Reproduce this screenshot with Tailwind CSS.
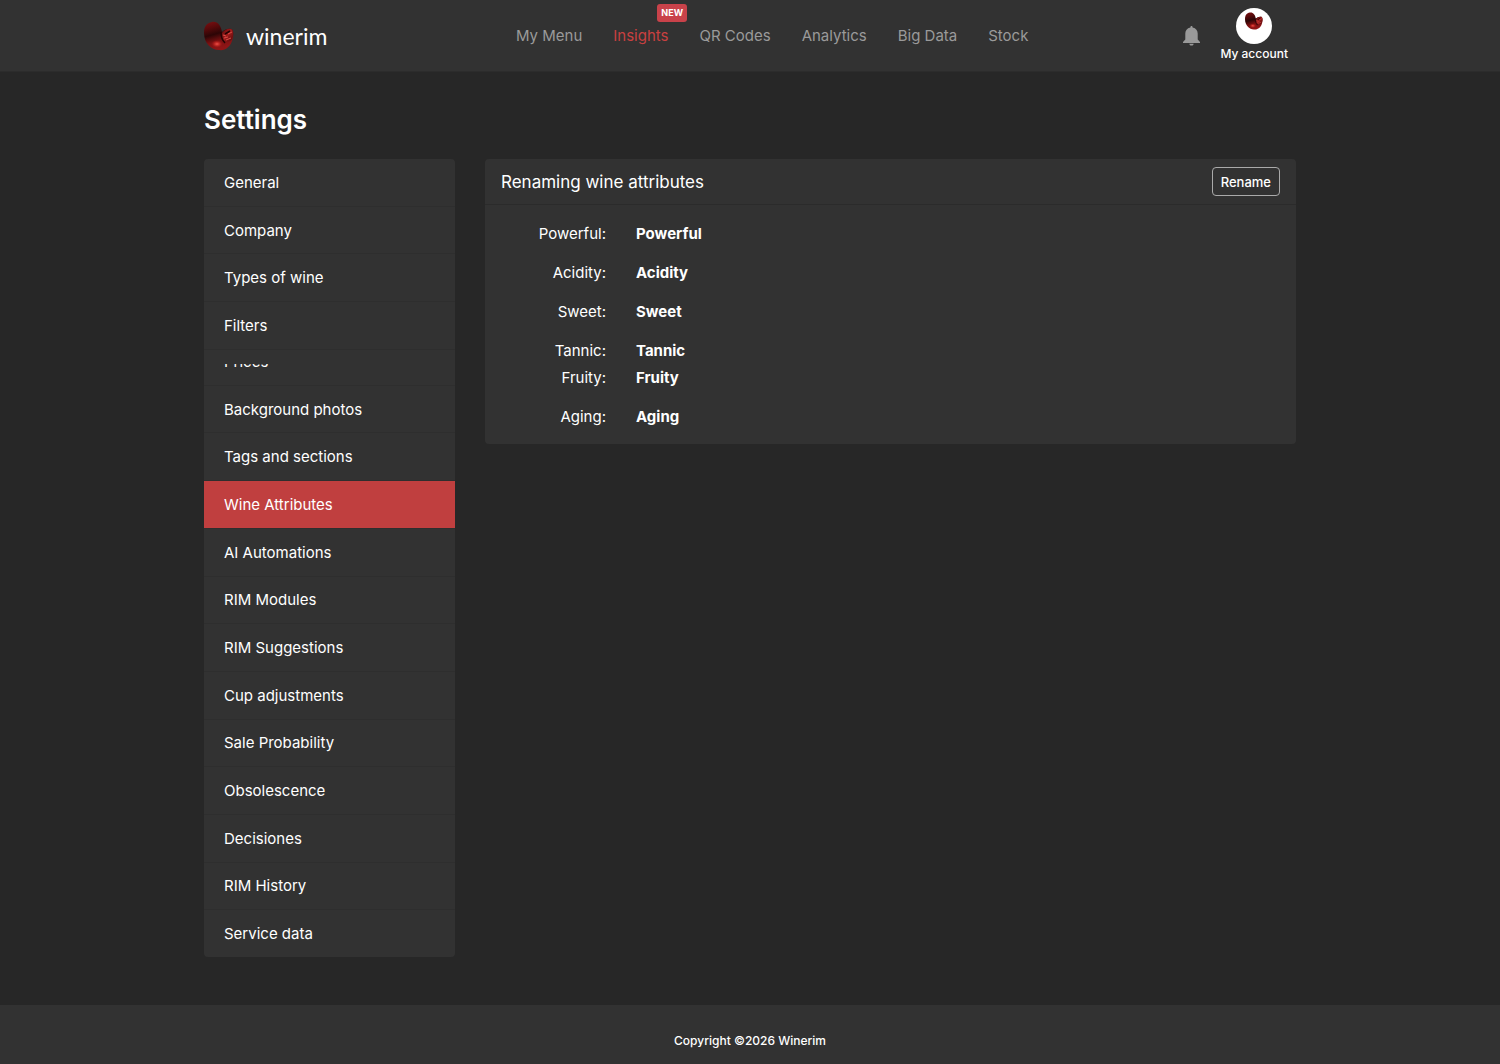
<!DOCTYPE html>
<html lang="en">
<head>
    <meta charset="UTF-8">
    <meta name="viewport" content="width=device-width, initial-scale=1.0">
    <title>Winerim - Settings</title>
    <script src="https://cdn.jsdelivr.net/npm/@tailwindcss/browser@4"></script>
</head>
<body class="bg-[#272727] text-white font-[Inter,sans-serif] text-[15px] leading-6 min-h-screen flex flex-col">
    <header class="bg-[#323232] border-b border-[#2c2c2c]">
        <div class="max-w-[1092px] mx-auto h-[71px] pt-px flex items-center">
            <a href="#" class="flex items-center gap-3 w-[312px]">
                <svg class="size-[30px]" viewBox="0 0 30 30" aria-hidden="true">
                    <defs>
                        <linearGradient id="bean" x1="0" y1="0" x2="0.3" y2="1">
                            <stop offset="0" stop-color="#7d1012"/>
                            <stop offset="0.25" stop-color="#5a0a0b"/>
                            <stop offset="0.5" stop-color="#2c0506"/>
                            <stop offset="0.75" stop-color="#7a1011"/>
                            <stop offset="1" stop-color="#8f1516"/>
                        </linearGradient>
                        <radialGradient id="glow">
                            <stop offset="0" stop-color="#f0524a"/>
                            <stop offset="0.5" stop-color="#c02420" stop-opacity="0.8"/>
                            <stop offset="1" stop-color="#8f1516" stop-opacity="0"/>
                        </radialGradient>
                        <linearGradient id="lobe" x1="0" y1="0" x2="1" y2="1">
                            <stop offset="0" stop-color="#5a0c0c"/>
                            <stop offset="0.5" stop-color="#a01c1c"/>
                            <stop offset="1" stop-color="#4a0808"/>
                        </linearGradient>
                        <symbol id="mark" viewBox="0 0 30 30">
                            <path fill="url(#bean)" d="M8 1C13 0 17 4 18 11C20 9 24 7 27 8C30 9 30 15 28 20C26 26 21 30 15 29C7 29 0 22 0 12C0 5 3 2 8 1Z"/>
                            <ellipse cx="13" cy="23" rx="6" ry="4" fill="url(#glow)"/>
                            <path fill="url(#lobe)" d="M18 12C20 9 24 7 27 8C30 9 29 15 28 18C25 22 20 21 18 18Z"/>
                            <path fill="none" stroke="#240404" stroke-width="1.500" d="M17 11C17 15 18 19 21 22M21 13L26 10"/>
                            <path fill="none" stroke="#d94a44" stroke-width="1" d="M19 14L22 15M20 17L24 16M22 19L27 17M24 13L28 11"/>
                        </symbol>
                    </defs>
                    <use href="#mark"/>
                </svg>
                <span class="font-[Lato,sans-serif] text-[23px]">winerim</span>
            </a>
            <nav class="flex gap-[31px] text-[#9a9a9a]">
                <a href="#">My Menu</a>
                <a href="#" class="relative text-[#c94040]">Insights
                    <span class="absolute left-11 -top-5 bg-[#c9424a] text-white text-[9px] leading-[18px] font-bold px-1 rounded-[3px]">NEW</span>
                </a>
                <a href="#">QR Codes</a>
                <a href="#">Analytics</a>
                <a href="#">Big Data</a>
                <a href="#">Stock</a>
            </nav>
            <div class="ml-auto flex items-center gap-5 pr-2">
                <button aria-label="Notifications">
                    <svg class="w-[17px] h-5 fill-[#999999]" viewBox="0 0 17 20" aria-hidden="true"><path d="M8.500 0C7.700 0 7.400 .6 7.400 1.400C4 2 2.300 4.500 2.300 7.500V13.500L0 16V17H17V16L14.700 13.500V7.500C14.700 4.500 13 2 9.600 1.400C9.600 .6 9.300 0 8.500 0ZM6.300 17.700C6.500 19 7.300 19.600 8.500 19.600S10.500 19 10.700 17.700Z"/></svg>
                </button>
                <a href="#" class="flex flex-col items-center gap-0.5 pb-0.5 text-[12px] leading-4 font-medium">
                    <span class="size-9 rounded-full bg-white flex justify-center pt-1">
                        <svg class="size-[18px]" viewBox="0 0 30 30" aria-hidden="true"><use href="#mark"/></svg>
                    </span>
                    <span>My account</span>
                </a>
            </div>
        </div>
    </header>

    <main class="w-full max-w-[1092px] mx-auto grow pt-7 pb-[46px]">
        <h1 class="text-[26px] leading-10 font-semibold">Settings</h1>
        <div class="flex items-start gap-[30px] mt-[19px]">
            <ul class="w-[251px] min-h-[798px] shrink-0 flex flex-col rounded bg-[#323232] overflow-hidden *:border-b *:border-[#2e2e2e] *:last:border-0">
                <li class="flex-1 flex items-center px-5 pt-px"><a href="#">General</a></li>
                <li class="flex-1 flex items-center px-5 pt-px"><a href="#">Company</a></li>
                <li class="flex-1 flex items-center px-5 pt-px"><a href="#">Types of wine</a></li>
                <li class="flex-1 flex items-center px-5 pt-px"><a href="#">Filters</a></li>
                <!-- collapsed row -->
                <li class="h-9 pt-[14px] px-5"><a href="#" class="block h-5 overflow-hidden"><span class="block -mt-[14px]">Prices</span></a></li>
                <li class="flex-1 flex items-center px-5 pt-px"><a href="#">Background photos</a></li>
                <li class="flex-1 flex items-center px-5 pt-px"><a href="#">Tags and sections</a></li>
                <li class="flex-1 flex items-center px-5 pt-px bg-[#c03f3f]"><a href="#">Wine Attributes</a></li>
                <li class="flex-1 flex items-center px-5 pt-px"><a href="#">AI Automations</a></li>
                <li class="flex-1 flex items-center px-5 pt-px"><a href="#">RIM Modules</a></li>
                <li class="flex-1 flex items-center px-5 pt-px"><a href="#">RIM Suggestions</a></li>
                <li class="flex-1 flex items-center px-5 pt-px"><a href="#">Cup adjustments</a></li>
                <li class="flex-1 flex items-center px-5 pt-px"><a href="#">Sale Probability</a></li>
                <li class="flex-1 flex items-center px-5 pt-px"><a href="#">Obsolescence</a></li>
                <li class="flex-1 flex items-center px-5 pt-px"><a href="#">Decisiones</a></li>
                <li class="flex-1 flex items-center px-5 pt-px"><a href="#">RIM History</a></li>
                <li class="flex-1 flex items-center px-5 pt-px"><a href="#">Service data</a></li>
            </ul>
            <section class="grow rounded bg-[#323232]">
                <div class="flex items-center justify-between px-4 py-2 border-b border-[#2b2b2b]">
                    <h2 class="text-[17px]">Renaming wine attributes</h2>
                    <button class="border border-[#aaaaaa] rounded px-2 h-[29px] text-[13px] leading-5 font-medium">Rename</button>
                </div>
                <dl class="pt-[15px] pb-[14px] leading-[27px] *:grid *:grid-cols-[121px_1fr] *:gap-[30px]">
                    <div class="mb-3"><dt class="text-right">Powerful:</dt><dd class="font-bold">Powerful</dd></div>
                    <div class="mb-3"><dt class="text-right">Acidity:</dt><dd class="font-bold">Acidity</dd></div>
                    <div class="mb-3"><dt class="text-right">Sweet:</dt><dd class="font-bold">Sweet</dd></div>
                    <div><dt class="text-right">Tannic:</dt><dd class="font-bold">Tannic</dd></div>
                    <div class="mb-3"><dt class="text-right">Fruity:</dt><dd class="font-bold">Fruity</dd></div>
                    <div><dt class="text-right">Aging:</dt><dd class="font-bold">Aging</dd></div>
                </dl>
            </section>
        </div>
    </main>

    <footer class="bg-[#323232] pt-6 pb-[11px] text-center text-[12px] font-medium">Copyright ©2026 Winerim</footer>
</body>
</html>
